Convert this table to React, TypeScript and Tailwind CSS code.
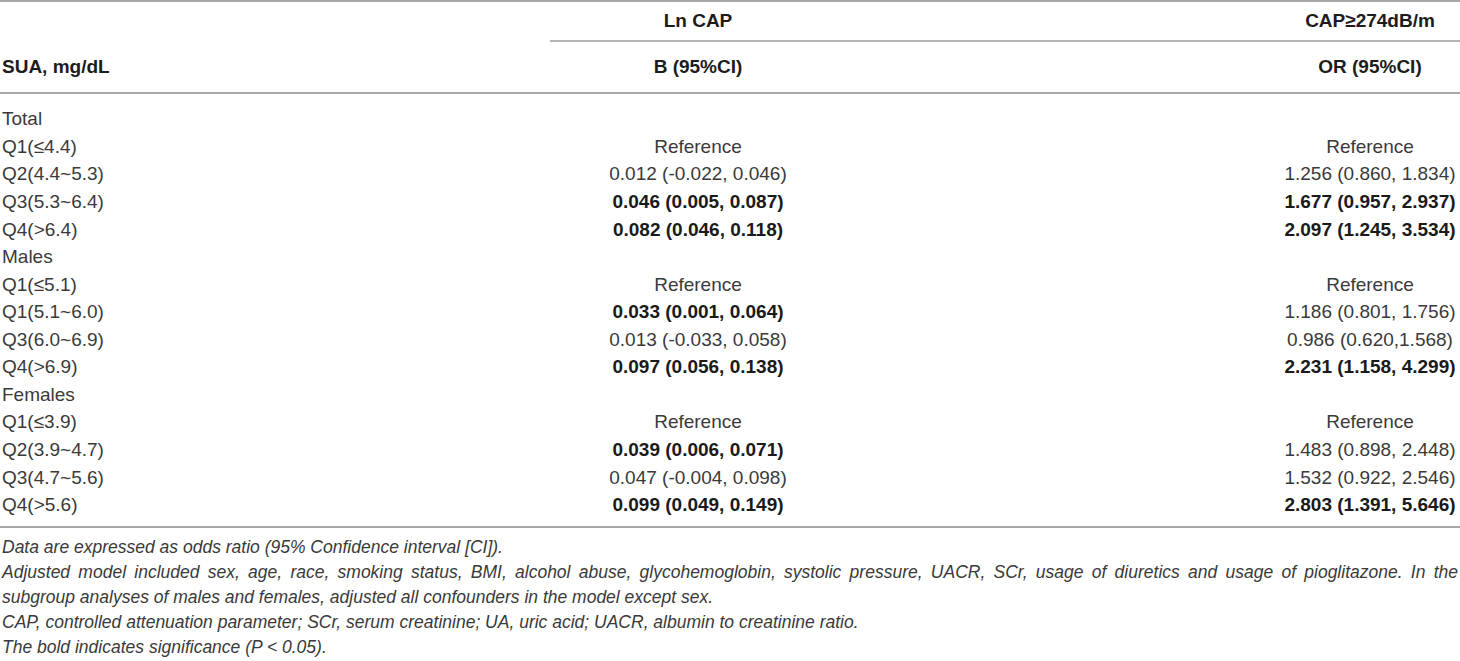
import React from "react";

type Row = { label: string; b: string; bBold?: boolean; or?: string; orBold?: boolean; group?: boolean };

const rows: Row[] = [
  { label: "Total", b: "", or: "", group: true },
  { label: "Q1(≤4.4)", b: "Reference", or: "Reference" },
  { label: "Q2(4.4~5.3)", b: "0.012 (-0.022, 0.046)", or: "1.256 (0.860, 1.834)" },
  { label: "Q3(5.3~6.4)", b: "0.046 (0.005, 0.087)", bBold: true, or: "1.677 (0.957, 2.937)", orBold: true },
  { label: "Q4(>6.4)", b: "0.082 (0.046, 0.118)", bBold: true, or: "2.097 (1.245, 3.534)", orBold: true },
  { label: "Males", b: "", or: "", group: true },
  { label: "Q1(≤5.1)", b: "Reference", or: "Reference" },
  { label: "Q1(5.1~6.0)", b: "0.033 (0.001, 0.064)", bBold: true, or: "1.186 (0.801, 1.756)" },
  { label: "Q3(6.0~6.9)", b: "0.013 (-0.033, 0.058)", or: "0.986 (0.620,1.568)" },
  { label: "Q4(>6.9)", b: "0.097 (0.056, 0.138)", bBold: true, or: "2.231 (1.158, 4.299)", orBold: true },
  { label: "Females", b: "", or: "", group: true },
  { label: "Q1(≤3.9)", b: "Reference", or: "Reference" },
  { label: "Q2(3.9~4.7)", b: "0.039 (0.006, 0.071)", bBold: true, or: "1.483 (0.898, 2.448)" },
  { label: "Q3(4.7~5.6)", b: "0.047 (-0.004, 0.098)", or: "1.532 (0.922, 2.546)" },
  { label: "Q4(>5.6)", b: "0.099 (0.049, 0.149)", bBold: true, or: "2.803 (1.391, 5.646)", orBold: true },
];

const font = { fontFamily: '"Liberation Sans", Arial, sans-serif' };

export default function App() {
  return (
    <div className="w-[1460px] h-[661px] bg-white overflow-hidden text-[#3a3a3a]" style={font}>
      <div className="border-t-2 border-[#a8a8a8]" />
      {/* Header */}
      <div className="grid grid-cols-[550px_296px_1fr_180px] text-[19px] font-bold text-[#1c1c1c]">
        <div className="row-span-2 flex items-end pl-[2px] pb-[11px]">SUA, mg/dL</div>
        <div className="h-[40px] flex items-end justify-center pb-[5px] border-b-2 border-[#b4b4b4]">Ln CAP</div>
        <div className="h-[40px] border-b-2 border-[#b4b4b4]" />
        <div className="h-[40px] flex items-end justify-center pb-[5px] border-b-2 border-[#b4b4b4]">CAP≥274dB/m</div>
        <div className="h-[50px] flex items-center justify-center">B (95%CI)</div>
        <div />
        <div className="h-[50px] flex items-center justify-center">OR (95%CI)</div>
      </div>
      <div className="border-t-2 border-[#a8a8a8]" />
      {/* Body */}
      <div className="pt-[11px] pb-[8px] text-[19px]">
        {rows.map((r, i) => (
          <div key={i} className="grid grid-cols-[550px_296px_1fr_180px] h-[27.57px] items-center leading-none">
            <div className="pl-[2px] whitespace-nowrap">{r.label}</div>
            <div className={"text-center whitespace-nowrap " + (r.bBold ? "font-bold text-[#1a1a1a]" : "")}>{r.b}</div>
            <div />
            <div className={"text-center whitespace-nowrap " + (r.orBold ? "font-bold text-[#1a1a1a]" : "")}>{r.or}</div>
          </div>
        ))}
      </div>
      <div className="border-t-2 border-[#a8a8a8]" />
      {/* Footnotes */}
      <div className="pt-[7px] pl-[2px] pr-[2px] italic text-[17.5px] leading-[25px] text-[#3a3a3a]">
        <p>Data are expressed as odds ratio (95% Confidence interval [CI]).</p>
        <div>
          <p className="text-justify [text-align-last:justify] whitespace-nowrap">
            Adjusted model included sex, age, race, smoking status, BMI, alcohol abuse, glycohemoglobin, systolic pressure, UACR, SCr, usage of diuretics and usage of pioglitazone. In the
          </p>
          <p>subgroup analyses of males and females, adjusted all confounders in the model except sex.</p>
        </div>
        <p>CAP, controlled attenuation parameter; SCr, serum creatinine; UA, uric acid; UACR, albumin to creatinine ratio.</p>
        <p>The bold indicates significance (P &lt; 0.05).</p>
      </div>
    </div>
  );
}
